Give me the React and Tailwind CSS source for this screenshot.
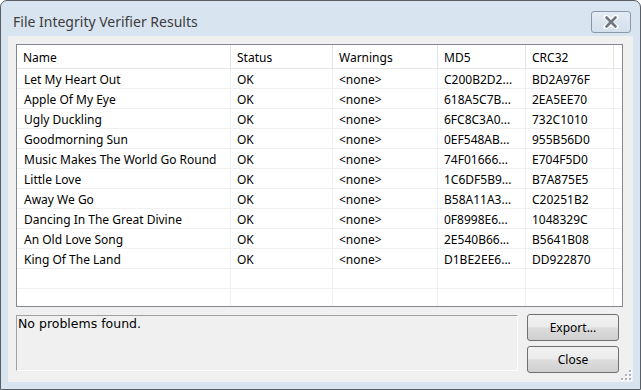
import React from "react"

const rows = [
  ["Let My Heart Out", "C200B2D2...", "BD2A976F"],
  ["Apple Of My Eye", "618A5C7B...", "2EA5EE70"],
  ["Ugly Duckling", "6FC8C3A0...", "732C1010"],
  ["Goodmorning Sun", "0EF548AB...", "955B56D0"],
  ["Music Makes The World Go Round", "74F01666...", "E704F5D0"],
  ["Little Love", "1C6DF5B9...", "B7A875E5"],
  ["Away We Go", "B58A11A3...", "C20251B2"],
  ["Dancing In The Great Divine", "0F8998E6...", "1048329C"],
  ["An Old Love Song", "2E540B66...", "B5641B08"],
  ["King Of The Land", "D1BE2EE6...", "DD922870"],
  ["", "", ""],
  ["", "", ""],
]

const cols = ["w-[214px]", "w-[102px]", "w-[105px]", "w-[88px]", "w-[88px]"]

function CloseX() {
  return (
    <svg width="16" height="14" viewBox="0 0 16 14">
      <path
        d="M3 2 L8 6 L13 2 M3 12 L8 8 L13 12 M8 6 L8 8"
        stroke="#ffffff"
        strokeWidth="5"
        strokeLinecap="round"
        fill="none"
      />
      <path
        d="M3.5 2.5 L12.5 11.5 M12.5 2.5 L3.5 11.5"
        stroke="#6f7680"
        strokeWidth="2.6"
        strokeLinecap="round"
        fill="none"
      />
    </svg>
  )
}

function Grip() {
  const dots = [
    [8, 0],
    [4, 4],
    [8, 4],
    [0, 8],
    [4, 8],
    [8, 8],
  ]
  return (
    <svg width="11" height="11" viewBox="0 0 11 11">
      {dots.map(([x, y], i) => (
        <g key={i}>
          <rect x={x + 1} y={y + 1} width="2" height="2" fill="#ffffff" />
          <rect x={x} y={y} width="2" height="2" fill="#a7b3c2" />
        </g>
      ))}
    </svg>
  )
}

function Button({ children }) {
  return (
    <button
      type="button"
      className="flex h-[27px] w-full items-center justify-center rounded-[3px] border border-[#707070] bg-[linear-gradient(#f2f2f2_0%,#ebebeb_48%,#dddddd_52%,#cfcfcf_100%)] pt-[1px] text-[12px] text-black"
    >
      {children}
    </button>
  )
}

export default function App() {
  const listFont = { fontFamily: "'Noto Sans', 'Open Sans', sans-serif" }
  return (
    <div
      className="flex h-[390px] w-[641px] flex-col overflow-hidden rounded-t-[7px] border border-[#5a5f66] bg-[#d9e4f1]"
      style={listFont}
    >
      <div className="flex h-[35px] shrink-0 items-start justify-between pl-[12px] pr-[9px]">
        <span className="mt-[11px] text-[14px] leading-[20px] text-[#3c3c3c]">
          File Integrity Verifier Results
        </span>
        <div className="mt-[10px] flex h-[22px] w-[40px] items-center justify-center rounded-[3px] border border-[#8a98aa] bg-[linear-gradient(#e4ecf5,#d3dfec)]">
          <CloseX />
        </div>
      </div>

      <div className="relative mx-[7px] flex h-[346px] flex-col bg-[#f0f0f0] pl-[8px] pr-[10px] pt-[8px]">
        <div className="flex h-[263px] flex-col overflow-hidden border border-[#828790] bg-white text-[12px] text-black">
          <div className="flex h-[24px] shrink-0 border-b border-[#e5e5e5]">
            {["Name", "Status", "Warnings", "MD5", "CRC32"].map((h, i) => (
              <div
                key={h}
                className={`${cols[i]} flex shrink-0 items-center border-r border-[#e3e3e3] pl-[6px] pt-[2px]`}
              >
                {h}
              </div>
            ))}
            <div className="flex-1" />
          </div>
          {rows.map((r, i) => (
            <div key={i} className="flex h-[20px] shrink-0 border-b border-[#f0f0f0]">
              {[r[0], r[0] ? "OK" : "", r[0] ? "<none>" : "", r[1], r[2]].map((c, j) => (
                <div
                  key={j}
                  className={`${cols[j]} flex shrink-0 items-center border-r border-[#edf1f7] ${
                    j === 0 ? "pl-[7px]" : "pl-[6px]"
                  } whitespace-nowrap pt-[2px]`}
                >
                  {c}
                </div>
              ))}
              <div className="flex-1" />
            </div>
          ))}
        </div>

        <div className="mt-[8px] flex">
          <div
            className="h-[56px] w-[502px] border border-t-[#a0a0a0] border-l-[#a0a0a0] border-r-white border-b-white pl-[1px] text-[12.5px] leading-[16px] text-black"
            style={{ fontFamily: "'DejaVu Sans', sans-serif" }}
          >
            No problems found.
          </div>
          <div className="ml-[9px] mt-[-1px] flex w-[92px] flex-col gap-[5px]">
            <Button>Export...</Button>
            <Button>Close</Button>
          </div>
        </div>

        <div className="absolute bottom-[1px] right-[1px]">
          <Grip />
        </div>
      </div>
    </div>
  )
}
